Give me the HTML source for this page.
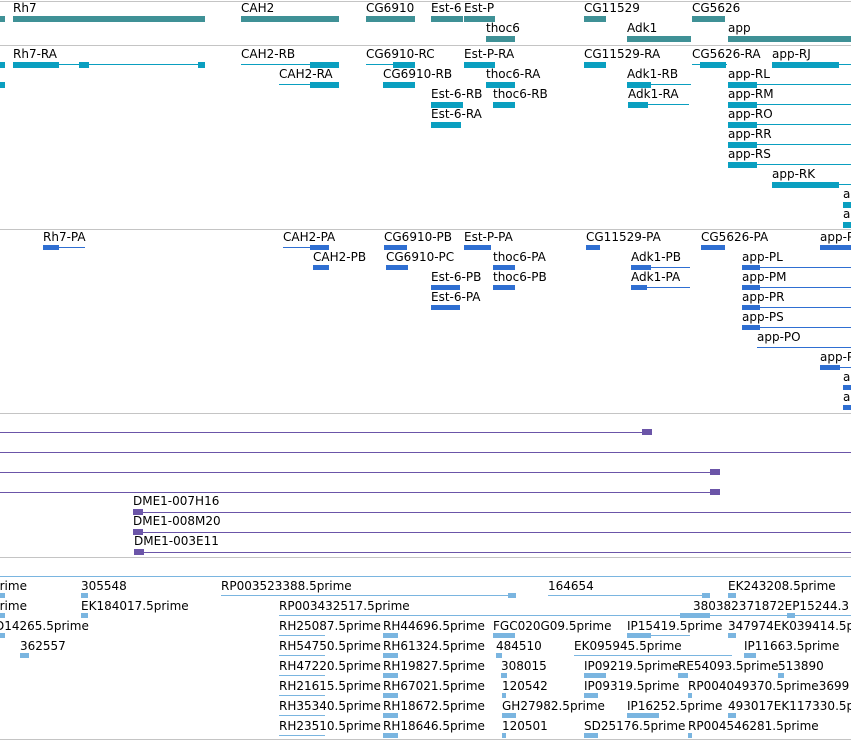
<!DOCTYPE html>
<html><head><meta charset="utf-8"><style>
body{margin:0;width:851px;height:741px;overflow:hidden;background:#fff;position:relative;font-family:"DejaVu Sans","Liberation Sans",sans-serif}
.t{position:absolute;font-size:12px;line-height:14px;white-space:nowrap;color:#000}
.b{position:absolute;height:6px}
.l{position:absolute;height:1px}
.g{background:#3f9196}.r{background:#0a9fc0}.p{background:#2f6fd2}.e{background:#7ab5e0}.v{background:#6b55a8}
.s{position:absolute;left:0;width:851px;height:1px;background:#c4c4c4}
</style></head><body>
<div class="s" style="top:1px"></div><div class="s" style="top:45px"></div><div class="s" style="top:229px"></div><div class="s" style="top:413px"></div><div class="s" style="top:557px"></div><div class="s" style="top:739px"></div>
<div class="l e" style="top:576px;left:0;width:851px"></div>

<!-- genes -->
<div class="b g" style="left:0;top:16px;width:5px"></div>
<div class="t" style="left:13px;top:1px">Rh7</div><div class="b g" style="left:13px;top:16px;width:192px"></div>
<div class="t" style="left:241px;top:1px">CAH2</div><div class="b g" style="left:241px;top:16px;width:98px"></div>
<div class="t" style="left:366px;top:1px">CG6910</div><div class="b g" style="left:366px;top:16px;width:49px"></div>
<div class="t" style="left:431px;top:1px">Est-6</div><div class="b g" style="left:431px;top:16px;width:32px"></div>
<div class="t" style="left:464px;top:1px">Est-P</div><div class="b g" style="left:464px;top:16px;width:31px"></div>
<div class="t" style="left:584px;top:1px">CG11529</div><div class="b g" style="left:584px;top:16px;width:22px"></div>
<div class="t" style="left:692px;top:1px">CG5626</div><div class="b g" style="left:692px;top:16px;width:33px"></div>
<div class="t" style="left:486px;top:21px">thoc6</div><div class="b g" style="left:486px;top:36px;width:29px"></div>
<div class="t" style="left:627px;top:21px">Adk1</div><div class="b g" style="left:627px;top:36px;width:64px"></div>
<div class="t" style="left:728px;top:21px">app</div><div class="b g" style="left:728px;top:36px;width:123px"></div>

<!-- transcripts -->
<div class="b r" style="left:0;top:62px;width:5px"></div><div class="b r" style="left:0;top:82px;width:5px"></div>
<div class="t" style="left:13px;top:47px">Rh7-RA</div><div class="b r" style="left:13px;top:62px;width:46px"></div><div class="l r" style="left:13px;top:64px;width:192px"></div><div class="b r" style="left:79px;top:62px;width:10px"></div><div class="b r" style="left:198px;top:62px;width:7px"></div>
<div class="t" style="left:241px;top:47px">CAH2-RB</div><div class="l r" style="left:241px;top:64px;width:98px"></div><div class="b r" style="left:310px;top:62px;width:29px"></div>
<div class="t" style="left:366px;top:47px">CG6910-RC</div><div class="l r" style="left:366px;top:64px;width:49px"></div><div class="b r" style="left:393px;top:62px;width:22px"></div>
<div class="t" style="left:464px;top:47px">Est-P-RA</div><div class="b r" style="left:464px;top:62px;width:31px"></div>
<div class="t" style="left:584px;top:47px">CG11529-RA</div><div class="b r" style="left:584px;top:62px;width:22px"></div>
<div class="t" style="left:692px;top:47px">CG5626-RA</div><div class="l r" style="left:692px;top:64px;width:35px"></div><div class="b r" style="left:700px;top:62px;width:26px"></div>
<div class="t" style="left:772px;top:47px">app-RJ</div><div class="b r" style="left:772px;top:62px;width:67px"></div><div class="l r" style="left:772px;top:64px;width:79px"></div>
<div class="t" style="left:279px;top:67px">CAH2-RA</div><div class="l r" style="left:279px;top:84px;width:60px"></div><div class="b r" style="left:310px;top:82px;width:29px"></div>
<div class="t" style="left:383px;top:67px">CG6910-RB</div><div class="b r" style="left:383px;top:82px;width:32px"></div>
<div class="t" style="left:486px;top:67px">thoc6-RA</div><div class="b r" style="left:486px;top:82px;width:29px"></div>
<div class="t" style="left:627px;top:67px">Adk1-RB</div><div class="l r" style="left:627px;top:84px;width:64px"></div><div class="b r" style="left:627px;top:82px;width:24px"></div>
<div class="t" style="left:728px;top:67px">app-RL</div><div class="b r" style="left:728px;top:82px;width:29px"></div><div class="l r" style="left:728px;top:84px;width:123px"></div>
<div class="t" style="left:431px;top:87px">Est-6-RB</div><div class="b r" style="left:431px;top:102px;width:32px"></div>
<div class="t" style="left:493px;top:87px">thoc6-RB</div><div class="b r" style="left:493px;top:102px;width:22px"></div>
<div class="t" style="left:628px;top:87px">Adk1-RA</div><div class="l r" style="left:628px;top:104px;width:61px"></div><div class="b r" style="left:628px;top:102px;width:20px"></div>
<div class="t" style="left:728px;top:87px">app-RM</div><div class="b r" style="left:728px;top:102px;width:29px"></div><div class="l r" style="left:728px;top:104px;width:123px"></div>
<div class="t" style="left:431px;top:107px">Est-6-RA</div><div class="b r" style="left:431px;top:122px;width:30px"></div>
<div class="t" style="left:728px;top:107px">app-RO</div><div class="b r" style="left:728px;top:122px;width:29px"></div><div class="l r" style="left:728px;top:124px;width:123px"></div>
<div class="t" style="left:728px;top:127px">app-RR</div><div class="b r" style="left:728px;top:142px;width:29px"></div><div class="l r" style="left:728px;top:144px;width:123px"></div>
<div class="t" style="left:728px;top:147px">app-RS</div><div class="b r" style="left:728px;top:162px;width:29px"></div><div class="l r" style="left:728px;top:164px;width:123px"></div>
<div class="t" style="left:772px;top:167px">app-RK</div><div class="b r" style="left:772px;top:182px;width:67px"></div><div class="l r" style="left:772px;top:184px;width:79px"></div>
<div class="t" style="left:843px;top:187px">app</div><div class="b r" style="left:843px;top:202px;width:8px"></div>
<div class="t" style="left:843px;top:207px">app</div><div class="b r" style="left:843px;top:222px;width:8px"></div>

<!-- proteins -->
<div class="t" style="left:43px;top:230px">Rh7-PA</div><div class="b p" style="left:43px;top:245px;width:16px;height:5px"></div><div class="l p" style="left:43px;top:247px;width:42px"></div>
<div class="t" style="left:283px;top:230px">CAH2-PA</div><div class="l p" style="left:283px;top:247px;width:46px"></div><div class="b p" style="left:310px;top:245px;width:19px;height:5px"></div>
<div class="t" style="left:384px;top:230px">CG6910-PB</div><div class="b p" style="left:384px;top:245px;width:23px;height:5px"></div>
<div class="t" style="left:464px;top:230px">Est-P-PA</div><div class="b p" style="left:464px;top:245px;width:27px;height:5px"></div>
<div class="t" style="left:586px;top:230px">CG11529-PA</div><div class="b p" style="left:586px;top:245px;width:14px;height:5px"></div>
<div class="t" style="left:701px;top:230px">CG5626-PA</div><div class="b p" style="left:701px;top:245px;width:24px;height:5px"></div>
<div class="t" style="left:820px;top:230px">app-PJ</div><div class="b p" style="left:820px;top:245px;width:31px;height:5px"></div>
<div class="t" style="left:313px;top:250px">CAH2-PB</div><div class="b p" style="left:313px;top:265px;width:16px;height:5px"></div>
<div class="t" style="left:386px;top:250px">CG6910-PC</div><div class="b p" style="left:386px;top:265px;width:22px;height:5px"></div>
<div class="t" style="left:493px;top:250px">thoc6-PA</div><div class="b p" style="left:493px;top:265px;width:22px;height:5px"></div>
<div class="t" style="left:631px;top:250px">Adk1-PB</div><div class="l p" style="left:631px;top:267px;width:59px"></div><div class="b p" style="left:631px;top:265px;width:20px;height:5px"></div>
<div class="t" style="left:742px;top:250px">app-PL</div><div class="b p" style="left:742px;top:265px;width:18px;height:5px"></div><div class="l p" style="left:742px;top:267px;width:109px"></div>
<div class="t" style="left:431px;top:270px">Est-6-PB</div><div class="b p" style="left:431px;top:285px;width:29px;height:5px"></div>
<div class="t" style="left:493px;top:270px">thoc6-PB</div><div class="b p" style="left:493px;top:285px;width:22px;height:5px"></div>
<div class="t" style="left:631px;top:270px">Adk1-PA</div><div class="l p" style="left:631px;top:287px;width:59px"></div><div class="b p" style="left:631px;top:285px;width:16px;height:5px"></div>
<div class="t" style="left:742px;top:270px">app-PM</div><div class="b p" style="left:742px;top:285px;width:18px;height:5px"></div><div class="l p" style="left:742px;top:287px;width:109px"></div>
<div class="t" style="left:431px;top:290px">Est-6-PA</div><div class="b p" style="left:431px;top:305px;width:29px;height:5px"></div>
<div class="t" style="left:742px;top:290px">app-PR</div><div class="b p" style="left:742px;top:305px;width:18px;height:5px"></div><div class="l p" style="left:742px;top:307px;width:109px"></div>
<div class="t" style="left:742px;top:310px">app-PS</div><div class="b p" style="left:742px;top:325px;width:18px;height:5px"></div><div class="l p" style="left:742px;top:327px;width:109px"></div>
<div class="t" style="left:757px;top:330px">app-PO</div><div class="l p" style="left:757px;top:347px;width:94px"></div>
<div class="t" style="left:820px;top:350px">app-PK</div><div class="b p" style="left:820px;top:365px;width:20px;height:5px"></div><div class="l p" style="left:820px;top:367px;width:31px"></div>
<div class="t" style="left:843px;top:370px">app</div><div class="b p" style="left:843px;top:385px;width:8px;height:5px"></div>
<div class="t" style="left:843px;top:390px">app</div><div class="b p" style="left:843px;top:405px;width:8px;height:5px"></div>

<!-- purple -->
<div class="l v" style="left:0;top:432px;width:652px"></div><div class="b v" style="left:642px;top:429px;width:10px"></div>
<div class="l v" style="left:0;top:452px;width:851px"></div>
<div class="l v" style="left:0;top:472px;width:720px"></div><div class="b v" style="left:710px;top:469px;width:10px"></div>
<div class="l v" style="left:0;top:492px;width:720px"></div><div class="b v" style="left:710px;top:489px;width:10px"></div>
<div class="t" style="left:133px;top:494px">DME1-007H16</div><div class="l v" style="left:133px;top:512px;width:718px"></div><div class="b v" style="left:133px;top:509px;width:10px"></div>
<div class="t" style="left:133px;top:514px">DME1-008M20</div><div class="l v" style="left:133px;top:532px;width:718px"></div><div class="b v" style="left:133px;top:529px;width:10px"></div>
<div class="t" style="left:134px;top:534px">DME1-003E11</div><div class="l v" style="left:134px;top:552px;width:717px"></div><div class="b v" style="left:134px;top:549px;width:10px"></div>

<!-- ESTs -->
<div class="t" style="left:-8px;top:579px">prime</div><div class="b e" style="left:0;top:593px;width:5px;height:5px"></div>
<div class="t" style="left:81px;top:579px">305548</div><div class="b e" style="left:81px;top:593px;width:7px;height:5px"></div>
<div class="t" style="left:221px;top:579px">RP003523388.5prime</div><div class="l e" style="left:221px;top:595px;width:295px"></div><div class="b e" style="left:508px;top:593px;width:8px;height:5px"></div>
<div class="t" style="left:548px;top:579px">164654</div><div class="l e" style="left:548px;top:595px;width:162px"></div><div class="b e" style="left:702px;top:593px;width:8px;height:5px"></div>
<div class="t" style="left:728px;top:579px">EK243208.5prime</div><div class="b e" style="left:728px;top:593px;width:8px;height:5px"></div>
<div class="t" style="left:-8px;top:599px">prime</div><div class="b e" style="left:0;top:613px;width:5px;height:5px"></div>
<div class="t" style="left:81px;top:599px">EK184017.5prime</div><div class="b e" style="left:81px;top:613px;width:7px;height:5px"></div>
<div class="t" style="left:279px;top:599px">RP003432517.5prime</div><div class="l e" style="left:279px;top:615px;width:572px"></div><div class="b e" style="left:680px;top:613px;width:30px;height:5px"></div>
<div class="t" style="left:693px;top:599px">380382371872EP15244.3</div><div class="b e" style="left:787px;top:613px;width:8px;height:5px"></div>
<div class="t" style="left:-5px;top:619px">D14265.5prime</div><div class="b e" style="left:0;top:633px;width:5px;height:5px"></div>
<div class="t" style="left:279px;top:619px">RH25087.5prime</div><div class="l e" style="left:279px;top:635px;width:46px"></div><div class="b e" style="left:383px;top:633px;width:15px;height:5px"></div>
<div class="t" style="left:383px;top:619px">RH44696.5prime</div>
<div class="t" style="left:493px;top:619px">FGC020G09.5prime</div><div class="b e" style="left:493px;top:633px;width:22px;height:5px"></div>
<div class="t" style="left:627px;top:619px">IP15419.5prime</div><div class="l e" style="left:627px;top:635px;width:63px"></div><div class="b e" style="left:627px;top:633px;width:24px;height:5px"></div>
<div class="t" style="left:728px;top:619px">347974EK039414.5prime</div><div class="b e" style="left:728px;top:633px;width:8px;height:5px"></div>
<div class="t" style="left:20px;top:639px">362557</div><div class="b e" style="left:20px;top:653px;width:9px;height:5px"></div>
<div class="t" style="left:279px;top:639px">RH54750.5prime</div><div class="l e" style="left:279px;top:655px;width:46px"></div><div class="b e" style="left:383px;top:653px;width:15px;height:5px"></div>
<div class="t" style="left:383px;top:639px">RH61324.5prime</div>
<div class="t" style="left:496px;top:639px">484510</div><div class="b e" style="left:496px;top:653px;width:6px;height:5px"></div>
<div class="t" style="left:574px;top:639px">EK095945.5prime</div><div class="l e" style="left:574px;top:655px;width:158px"></div>
<div class="t" style="left:744px;top:639px">IP11663.5prime</div><div class="b e" style="left:744px;top:653px;width:12px;height:5px"></div>
<div class="t" style="left:279px;top:659px">RH47220.5prime</div><div class="l e" style="left:279px;top:675px;width:46px"></div><div class="b e" style="left:383px;top:673px;width:15px;height:5px"></div>
<div class="t" style="left:383px;top:659px">RH19827.5prime</div>
<div class="t" style="left:501px;top:659px">308015</div><div class="b e" style="left:501px;top:673px;width:6px;height:5px"></div>
<div class="t" style="left:584px;top:659px">IP09219.5prime</div><div class="b e" style="left:584px;top:673px;width:22px;height:5px"></div>
<div class="t" style="left:678px;top:659px">RE54093.5prime</div><div class="b e" style="left:678px;top:673px;width:10px;height:5px"></div>
<div class="t" style="left:778px;top:659px">513890</div><div class="b e" style="left:778px;top:673px;width:6px;height:5px"></div>
<div class="t" style="left:279px;top:679px">RH21615.5prime</div><div class="l e" style="left:279px;top:695px;width:46px"></div><div class="b e" style="left:383px;top:693px;width:15px;height:5px"></div>
<div class="t" style="left:383px;top:679px">RH67021.5prime</div>
<div class="t" style="left:502px;top:679px">120542</div><div class="b e" style="left:502px;top:693px;width:4px;height:5px"></div>
<div class="t" style="left:584px;top:679px">IP09319.5prime</div><div class="b e" style="left:584px;top:693px;width:14px;height:5px"></div>
<div class="t" style="left:688px;top:679px">RP004049370.5prime3699</div><div class="b e" style="left:688px;top:693px;width:4px;height:5px"></div>
<div class="t" style="left:279px;top:699px">RH35340.5prime</div><div class="l e" style="left:279px;top:715px;width:46px"></div><div class="b e" style="left:383px;top:713px;width:15px;height:5px"></div>
<div class="t" style="left:383px;top:699px">RH18672.5prime</div>
<div class="t" style="left:502px;top:699px">GH27982.5prime</div><div class="b e" style="left:502px;top:713px;width:14px;height:5px"></div>
<div class="t" style="left:627px;top:699px">IP16252.5prime</div><div class="b e" style="left:627px;top:713px;width:32px;height:5px"></div>
<div class="t" style="left:728px;top:699px">493017EK117330.5prime</div><div class="b e" style="left:728px;top:713px;width:8px;height:5px"></div>
<div class="t" style="left:279px;top:719px">RH23510.5prime</div><div class="l e" style="left:279px;top:735px;width:46px"></div><div class="b e" style="left:383px;top:733px;width:15px;height:5px"></div>
<div class="t" style="left:383px;top:719px">RH18646.5prime</div>
<div class="t" style="left:502px;top:719px">120501</div><div class="b e" style="left:502px;top:733px;width:4px;height:5px"></div>
<div class="t" style="left:584px;top:719px">SD25176.5prime</div><div class="b e" style="left:584px;top:733px;width:14px;height:5px"></div>
<div class="t" style="left:688px;top:719px">RP004546281.5prime</div><div class="b e" style="left:688px;top:733px;width:4px;height:5px"></div>
</body></html>
